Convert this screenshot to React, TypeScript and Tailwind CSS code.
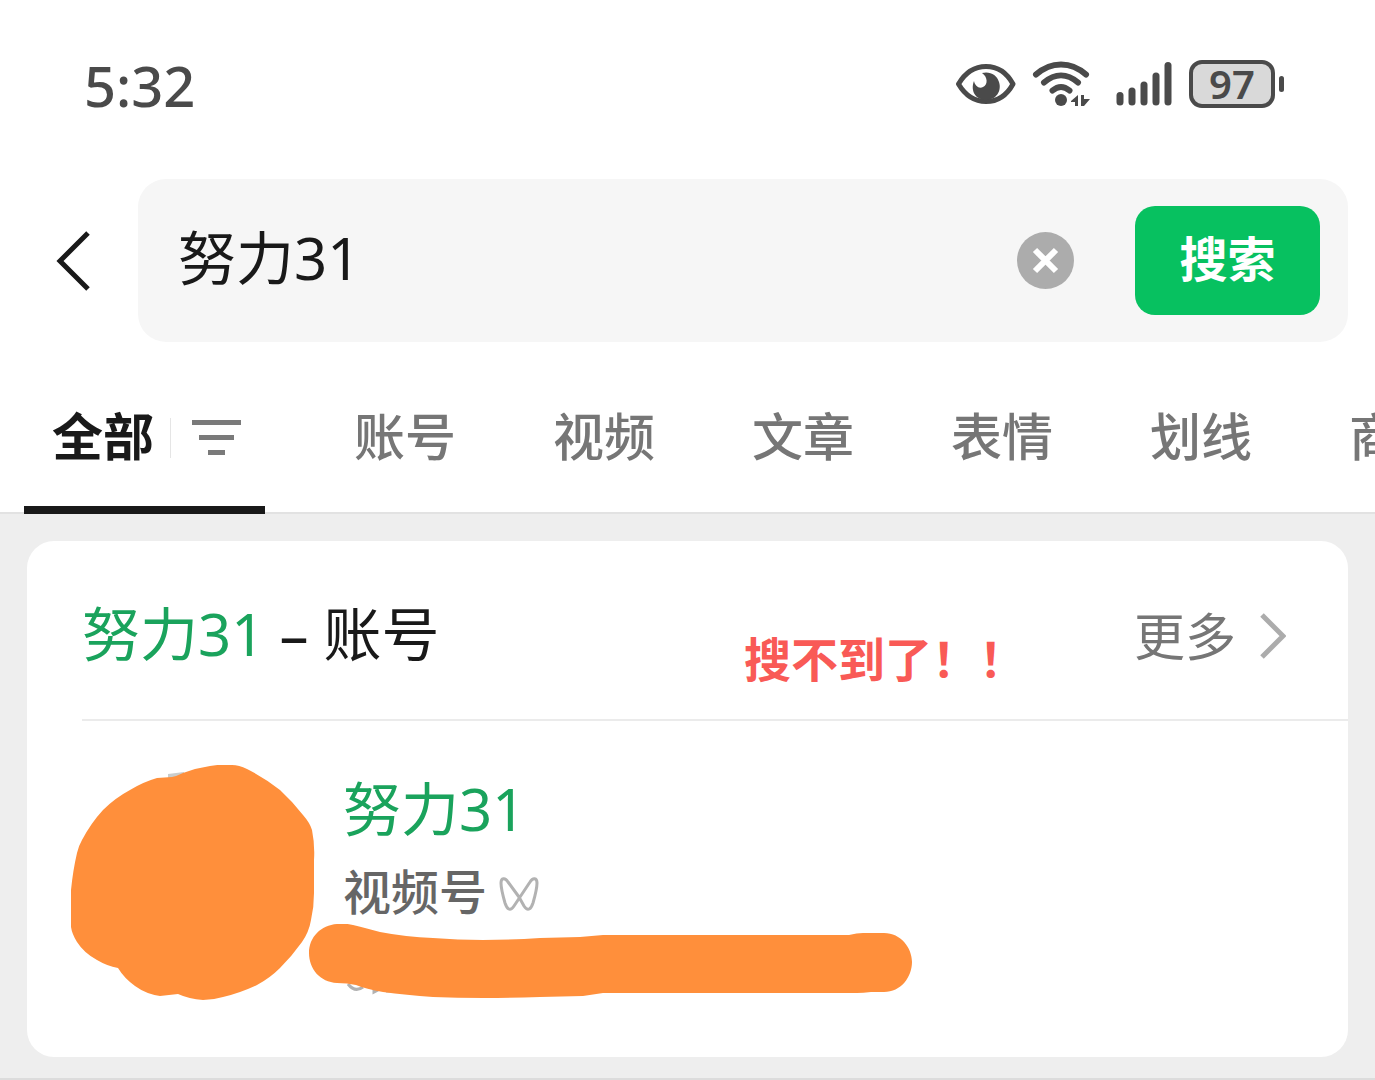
import React, { useState } from 'react'

const tabs = ['账号', '视频', '文章', '表情', '划线', '商品']

const StatusBar = () => {
  return (
    <header className="flex items-end justify-between pl-[84px] pr-[91px] h-[115px] text-[#4a4a4a]">
      <time className="text-[56px] leading-[60px] font-medium">5:32</time>
      <div className="flex items-center h-[62px]">
        <svg width="60" height="42" viewBox="0 0 60 42" className="mr-4" aria-label="护眼模式">
          <path
            d="M2.5 21C9 10 18 3.5 30 3.5S51 10 57 21C51 32 42 38.5 30 38.5S9 32 2.5 21Z"
            fill="none"
            stroke="currentColor"
            strokeWidth="5"
            strokeLinejoin="round"
          />
          <path
            d="M26 10C34 8 41 12 43 19C46 28 40 37 30 37C20 37 14 28 18 18C19 23 23 26 27 24C32 22 32 14 26 10Z"
            fill="currentColor"
          />
        </svg>
        <svg width="60" height="46" viewBox="0 0 60 46" className="mr-6" aria-label="Wi-Fi">
          <g fill="none" stroke="currentColor" strokeWidth="6" strokeLinecap="round">
            <path d="M4 13.5C19 0 39 0 54 13.5" />
            <path d="M12 21.5C23 12 35 12 46 21.5" />
            <path d="M20.5 29.5C26 25 32 25 37.5 29.5" />
          </g>
          <circle cx="29" cy="39" r="6" fill="currentColor" />
          <path d="M39 40L46 34V45H43V41H39ZM49 34H52V38H58L52 45H49Z" fill="currentColor" />
        </svg>
        <svg width="56" height="46" viewBox="0 0 56 46" className="mr-[17px]" aria-label="信号">
          <g stroke="currentColor" strokeWidth="7" strokeLinecap="round">
            <path d="M4 34.5V41" />
            <path d="M16 30V41" />
            <path d="M28 24V41" />
            <path d="M40 15V41" />
            <path d="M52 4.5V41" />
          </g>
        </svg>
        <div className="flex items-center gap-1">
          <div className="flex items-center justify-center w-[86px] h-12 rounded-[13px] border-4 border-[#4a4a4a] bg-[#d9d9d9] text-[40px] leading-[40px] font-semibold">
            97
          </div>
          <div className="w-[5px] h-4 rounded-full bg-[#4a4a4a]" />
        </div>
      </div>
    </header>
  )
}

const SearchBar = () => {
  const [query, setQuery] = useState('努力31')

  return (
    <form className="flex items-center pt-16 pl-14 pr-[27px]" onSubmit={(e) => e.preventDefault()}>
      <button type="button" aria-label="返回" className="mr-12 shrink-0 cursor-pointer">
        <svg width="34" height="60" viewBox="0 0 34 60" fill="none" stroke="#191919" strokeWidth="5">
          <path d="M32 2L4 30L32 58" />
        </svg>
      </button>
      <div className="flex flex-1 items-center min-w-0 h-[163px] rounded-[28px] bg-[#f6f6f6] pl-10 pr-7">
        <input
          aria-label="搜索内容"
          value={query}
          onChange={(e) => setQuery(e.target.value)}
          className="flex-1 min-w-0 h-[88px] mb-3 bg-transparent text-[58px] text-[#191919] outline-none"
        />
        <button type="button" aria-label="清除" onClick={() => setQuery('')} className="mr-[61px] cursor-pointer">
          <svg width="57" height="57" viewBox="0 0 57 57">
            <circle cx="28.5" cy="28.5" r="28.5" fill="#acacac" />
            <path d="M18 18L39 39M39 18L18 39" stroke="#fff" strokeWidth="6" />
          </svg>
        </button>
        <button
          type="submit"
          className="w-[185px] h-[109px] shrink-0 rounded-[20px] bg-[#07c160] pb-1 text-[48px] leading-[60px] font-bold text-white cursor-pointer"
        >
          搜索
        </button>
      </div>
    </form>
  )
}

const Tabs = () => {
  return (
    <nav className="flex h-[172px] pl-6 overflow-hidden bg-[linear-gradient(#e2e2e2,#e2e2e2)] bg-bottom bg-no-repeat bg-[length:100%_2px] whitespace-nowrap text-[51px] leading-[60px]">
      <div className="flex items-center shrink-0 w-[241px] pl-7 pt-7 border-b-8 border-[#191919]">
        <button className="pb-1 font-bold text-[#191919] cursor-pointer">全部</button>
        <span className="w-px h-10 ml-4 mr-[21px] bg-[#e5e5e5]" />
        <button aria-label="筛选" className="cursor-pointer">
          <svg width="49" height="36" viewBox="0 0 49 36" fill="#7a7a7a">
            <path d="M0 0H49V5H0ZM7 15H42V20H7ZM16 30H33V35H16Z" />
          </svg>
        </button>
      </div>
      <div className="flex items-center gap-[97px] pl-[89px] pt-4">
        {tabs.map((tab) => (
          <button key={tab} className="shrink-0 font-medium text-[#767676] cursor-pointer">
            {tab}
          </button>
        ))}
      </div>
    </nav>
  )
}

const ResultCard = () => {
  return (
    <section className="relative rounded-[27px] bg-white pb-14">
      <div className="flex items-center justify-between h-[180px] ml-[55px] pr-[62px] pt-3 border-b-2 border-[#ebebeb]">
        <h2 className="pb-1 text-[58px] leading-[80px] text-[#191919]">
          <span className="text-[#1aa35c]">努力31</span> – 账号
        </h2>
        <a href="#more" className="flex items-center gap-6 text-[51px] leading-[70px] text-[#767676]">
          更多
          <svg width="26" height="46" viewBox="0 0 26 46" fill="none" stroke="#acacac" strokeWidth="5">
            <path d="M2 2L23 23L2 44" />
          </svg>
        </a>
      </div>

      <p className="absolute left-[717px] top-[88px] text-[47px] leading-[60px] font-bold text-[#f95a56]">
        搜不到了！！
      </p>

      <div className="flex pl-11 pt-11">
        <svg width="244" height="236" viewBox="0 0 244 236" className="shrink-0" aria-hidden="true">
          <path d="M97 9L113 7V15H97Z" fill="#c9cdcd" />
          <path
            d="M86 13L101 12Q106 11 112 8Q125 3 139 1Q150 -1 161 0Q168 0 176 4Q194 13 209 25Q222 37 232 50Q239 58 241 65Q244 80 243 95V128Q243 142 240 155Q238 167 231 177Q221 191 209 203Q199 213 186 220Q169 228 152 232Q142 235 132 235Q118 234 107 229L89 231Q75 229 64 221Q53 213 47 203Q36 201 26 195Q13 188 6 177Q1 169 0 162V125Q2 105 6 88Q8 80 11 75Q20 58 32 45Q44 33 59 25Q72 17 86 13Z"
            fill="#ff8f3b"
          />
        </svg>
        <div className="relative flex-1 pl-7 pt-1">
          <h3 className="text-[58px] leading-[80px] text-[#1aa35c]">努力31</h3>
          <div className="flex items-center gap-3 pt-2 text-[48px] leading-[70px] text-[#666666] font-medium">
            视频号
            <svg width="40" height="36" viewBox="0 0 40 36" className="mt-1" fill="none" stroke="#b2b2b2" strokeWidth="3" strokeLinejoin="round">
              <path d="M20 21L9 6C6 1 2 2 2 7C2 13 4 20 6 27C8 33 11 36 15 30L31 6C34 1 38 2 38 7C38 13 36 20 34 27C32 33 29 36 25 30L20 21" />
            </svg>
          </div>
          <svg width="603" height="74" viewBox="0 0 603 74" className="absolute -left-[6px] top-[159px]" aria-hidden="true">
            <path d="M39 60Q46 69 54 63M65 64V68L69 66M77 67H84" fill="none" stroke="#b2b2b2" strokeWidth="3" />
            <path
              d="M28 0Q36 -1 44 1C54 3 62 6 71 8Q97 13 124 14Q149 16 174 16Q203 16 231 14L271 13L294 11H540Q548 9 554 9H575C592 9 603 24 603 38C603 53 592 68 575 68H562Q554 69 548 69H294L274 72L231 73Q172 75 124 73Q97 71 74 68Q57 65 47 61Q38 59 28 59C11 58 0 45 0 29C0 13 12 1 28 0Z"
              fill="#ff8f3b"
            />
          </svg>
        </div>
      </div>
    </section>
  )
}

const App = () => {
  return (
    <div
      lang="zh-CN"
      className="min-h-screen flex flex-col bg-white font-['Noto_Sans','Noto_Sans_CJK_SC',sans-serif]"
    >
      <StatusBar />
      <SearchBar />
      <Tabs />
      <main className="flex-1 bg-[#eeeeee] px-[27px] pt-[27px] pb-[21px] border-b-2 border-[#dcdcdc]">
        <ResultCard />
      </main>
    </div>
  )
}

export default App
